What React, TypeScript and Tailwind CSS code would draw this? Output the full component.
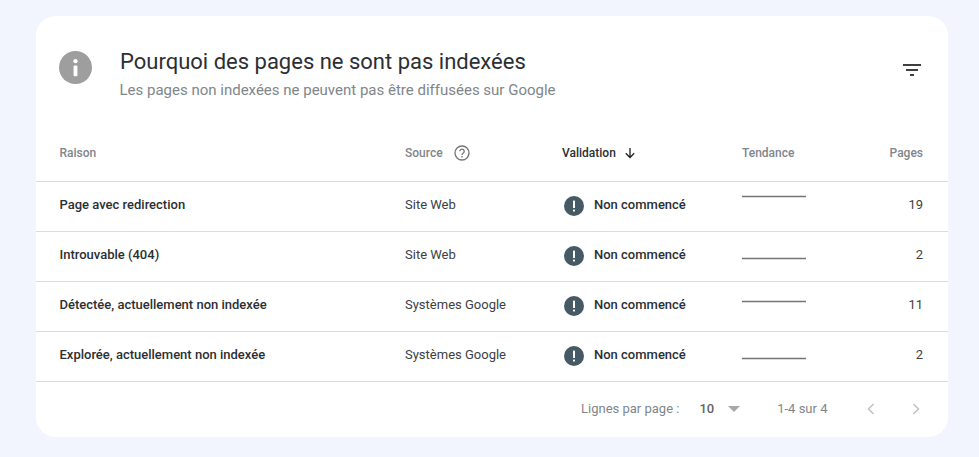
import React from 'react';

const rows = [
  { reason: 'Page avec redirection', source: 'Site Web', trendY: 14.5, pages: 19 },
  { reason: 'Introuvable (404)', source: 'Site Web', trendY: 26.5, pages: 2 },
  { reason: 'Détectée, actuellement non indexée', source: 'Systèmes Google', trendY: 19.5, pages: 11 },
  { reason: 'Explorée, actuellement non indexée', source: 'Systèmes Google', trendY: 26.5, pages: 2 },
];

const columns = 'grid grid-cols-[345.5px_157px_180px_1fr_auto] items-center pl-[23.5px] pr-[25px]';

const InfoIcon = () => (
  <svg width="33" height="33" viewBox="0 0 34 34">
    <circle cx="17" cy="17" r="17" fill="#9e9e9e" />
    <circle cx="17" cy="10.5" r="2.2" fill="#fff" />
    <rect x="15" y="15" width="4" height="11" rx="1" fill="#fff" />
  </svg>
);

const StatusIcon = () => (
  <svg width="20" height="20" viewBox="0 0 20 20">
    <circle cx="10" cy="10" r="10" fill="#455a64" />
    <rect x="9" y="4.5" width="2" height="7.5" rx="0.6" fill="#fff" />
    <rect x="9" y="13.5" width="2" height="2" rx="0.6" fill="#fff" />
  </svg>
);

const FilterIcon = () => (
  <svg width="18" height="12" viewBox="0 0 18 12">
    <rect x="0" y="0" width="18" height="2" fill="#3c4043" />
    <rect x="3" y="5" width="12" height="2" fill="#3c4043" />
    <rect x="7" y="10" width="4" height="2" fill="#3c4043" />
  </svg>
);

const HelpIcon = () => (
  <svg width="16" height="16" viewBox="0 0 16 16" fill="none">
    <circle cx="8" cy="8" r="7" stroke="#757575" strokeWidth="1.3" />
    <path d="M5.8 6.3a2.2 2.2 0 1 1 3.5 1.8c-.8.6-1.3 1-1.3 1.9" stroke="#757575" strokeWidth="1.3" />
    <rect x="7.3" y="11" width="1.4" height="1.4" fill="#757575" />
  </svg>
);

const ArrowDown = () => (
  <svg width="12" height="12" viewBox="0 0 12 12" fill="none">
    <path d="M6 1v9.5M1.8 6.3 6 10.5l4.2-4.2" stroke="#202124" strokeWidth="1.3" />
  </svg>
);

const Chevron = ({ dir }: { dir: 'left' | 'right' }) => (
  <svg width="10" height="12" viewBox="0 0 10 12" fill="none">
    <path d={dir === 'left' ? 'M7.5 1 2.5 6l5 5' : 'M2.5 1l5 5-5 5'} stroke="#c4c4c4" strokeWidth="1.6" />
  </svg>
);

const App: React.FC = () => {
  return (
    <div className="h-[457px] w-[979px] bg-[#f3f5fe] pt-4 pl-9 font-['Roboto',sans-serif] overflow-hidden">
      <div className="w-[912px] h-[421px] bg-white rounded-[20px] flex flex-col">
        {/* En-tete */}
        <div className="h-[110px] flex items-start pl-[23px] pr-[27px] pt-[35px]">
          <InfoIcon />
          <div className="ml-[28px] flex-1 -mt-[4px]">
            <div className="text-[22px] leading-[30px] text-[#2b2f33]">Pourquoi des pages ne sont pas indexées</div>
            <div className="text-[15px] leading-5 mt-[3px] text-[#80868b] -ml-[0.5px]">Les pages non indexées ne peuvent pas être diffusées sur Google</div>
          </div>
          <div className="mt-[13px]">
            <FilterIcon />
          </div>
        </div>

        {/* Colonnes */}
        <div className={`${columns} h-[56px] pb-[2px] border-b border-[#dadce0] text-xs font-medium`}>
          <span className="text-[#80868b]">Raison</span>
          <span className="flex items-center gap-[11px] text-[#80868b]">Source <HelpIcon /></span>
          <span className="flex items-center gap-[8px] text-[#2b2f33]">Validation <ArrowDown /></span>
          <span className="text-[#80868b]">Tendance</span>
          <span className="text-[#80868b]">Pages</span>
        </div>

        {rows.map((row) => (
          <div key={row.reason} className={`${columns} h-[50px] pb-[2px] border-b border-[#dadce0] text-[13px]`}>
            <span className="-mt-[2px] font-medium text-[#2b2f33]">{row.reason}</span>
            <span className="-mt-[2px] text-[#3c4043]">{row.source}</span>
            <span className="flex items-center gap-[10px] pl-[2px] font-medium text-[#2b2f33]">
              <StatusIcon />
              <span className="-mt-[2px]">Non commencé</span>
            </span>
            <svg width="64" height="48" viewBox="0 0 64 48">
              <line x1="0" x2="64" y1={row.trendY} y2={row.trendY} stroke="#757575" strokeWidth="1.5" />
            </svg>
            <span className="-mt-[2px] text-right text-[#3c4043]">{row.pages}</span>
          </div>
        ))}

        {/* Pagination */}
        <div className="flex-1 flex items-center pb-[2px] text-[13px] text-[#80868b] pl-[545px]">
          <span>Lignes par page :</span>
          <span className="ml-[20px] font-medium text-[#5f6368]">10</span>
          <span className="ml-[14px] w-0 h-0 border-x-[6px] border-x-transparent border-t-[6px] border-t-[#a8a8a8]" />
          <span className="ml-[37px]">1-4 sur 4</span>
          <span className="ml-[39px] flex"><Chevron dir="left" /></span>
          <span className="ml-[35px] flex"><Chevron dir="right" /></span>
        </div>
      </div>
    </div>
  );
};

export default App;
